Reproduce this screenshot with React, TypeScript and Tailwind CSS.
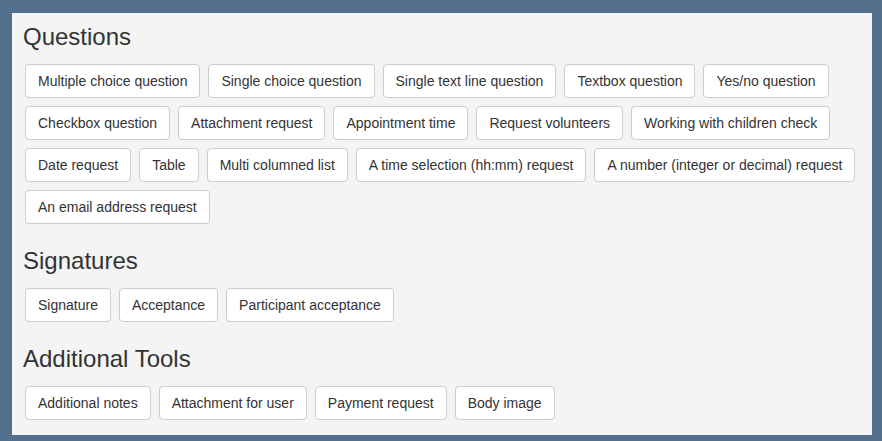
const sections = [
  {
    title: "Questions",
    items: [
      "Multiple choice question",
      "Single choice question",
      "Single text line question",
      "Textbox question",
      "Yes/no question",
      "Checkbox question",
      "Attachment request",
      "Appointment time",
      "Request volunteers",
      "Working with children check",
      "Date request",
      "Table",
      "Multi columned list",
      "A time selection (hh:mm) request",
      "A number (integer or decimal) request",
      "An email address request",
    ],
  },
  {
    title: "Signatures",
    items: ["Signature", "Acceptance", "Participant acceptance"],
  },
  {
    title: "Additional Tools",
    items: ["Additional notes", "Attachment for user", "Payment request", "Body image"],
  },
];

export default function App() {
  return (
    <div className="w-[882px] h-[441px] bg-[#546f8b] pt-[13px] pl-[12px] pr-[10px] pb-[6px] font-['Liberation_Sans',Arial,sans-serif] text-[#333]">
      <div className="bg-[#f4f4f4] h-[422px] px-[10px] pt-[11px] pb-[15px]">
        {sections.map((section, i) => (
          <section key={section.title} className={i > 0 ? "mt-[24px]" : ""}>
            <h3 className="text-[24px] leading-[26px] mb-[14px] pl-[1px] font-normal">
              {section.title}
            </h3>
            <div className="flex flex-wrap gap-2 pl-[3px]">
              {section.items.map((item) => (
                <button
                  key={item}
                  className="bg-white border border-[#ccc] rounded-[4px] px-3 py-[6px] text-[14px] leading-[20px] text-[#333]"
                >
                  {item}
                </button>
              ))}
            </div>
          </section>
        ))}
      </div>
    </div>
  );
}
